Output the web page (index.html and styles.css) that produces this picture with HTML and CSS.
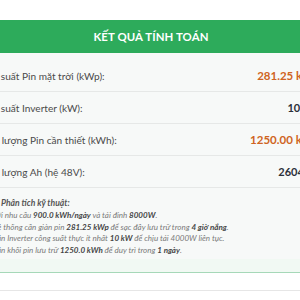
FILE: index.html
```html
<!DOCTYPE html>
<html lang="vi">
<head>
<meta charset="utf-8">
<link rel="stylesheet" href="styles.css">
</head>
<body>
<div class="page">
  <div class="card">
    <div class="card-head">KẾT QUẢ TÍNH TOÁN</div>
    <div class="card-body">
      <div class="row"><span class="label">Công suất Pin mặt trời (kWp):</span><span class="value hi">281.25 kWp</span></div>
      <div class="row"><span class="label">Công suất Inverter (kW):</span><span class="value">10 kW</span></div>
      <div class="row"><span class="label">Dung lượng Pin cần thiết (kWh):</span><span class="value hi">1250.00 kWh</span></div>
      <div class="row"><span class="label">Dung lượng Ah (hệ 48V):</span><span class="value">2604 Ah</span></div>
      <div class="note">
        <div class="note-title">Phân tích kỹ thuật:</div>
        <div class="note-lines">
          <div>Với nhu cầu <b>900.0 kWh/ngày</b> và tải đỉnh <b>8000W</b>.</div>
          <div>Hệ thống cần giàn pin <b>281.25 kWp</b> để sạc đầy lưu trữ trong <b>4 giờ nắng</b>.</div>
          <div>Cần Inverter công suất thực ít nhất <b>10 kW</b> để chịu tải 4000W liên tục.</div>
          <div>Cần khối pin lưu trữ <b>1250.0 kWh</b> để duy trì trong <b>1 ngày</b>.</div>
        </div>
      </div>
      <div class="foot"></div>
    </div>
  </div>
  <div class="after"></div>
</div>
</body>
</html>
```
FILE: styles.css
```css
html, body {
  margin: 0;
  padding: 0;
  background: #ffffff;
  overflow: hidden;
}
.page {
  width: 300px;
  height: 300px;
  overflow: hidden;
  padding-top: 20px;
  box-sizing: border-box;
  font-family: Lato, "Open Sans", sans-serif;
}
.card {
  width: 392px;
  margin-left: -45px;
}
.card-head {
  background: #2dab5b;
  color: #ffffff;
  font-weight: 700;
  font-size: 11.4px;
  text-align: center;
  height: 33px;
  line-height: 33px;
  letter-spacing: 0.1px;
}
.card-body {
  background: #f7f9f8;
  padding: 7px 27px 0 20px;
}
.row {
  display: flex;
  justify-content: space-between;
  align-items: center;
  height: 31px;
  border-bottom: 1px solid #e6e8e7;
}
.label {
  font-size: 10.1px;
  color: #4a4a4a;
}
.value {
  font-weight: 700;
  font-size: 11px;
  color: #2c3038;
}
.value.hi {
  color: #cf6422;
  font-size: 11.5px;
}
.note {
  padding: 10px 0 2px 0;
  font-size: 8px;
  font-style: italic;
  color: #7a7a7a;
  line-height: 11.8px;
}
.note-title {
  font-weight: 700;
  font-size: 8.6px;
  color: #555;
  margin-left: 26px;
}
.note-lines {
  margin-left: 17px;
}
.note-lines b {
  color: #444;
}
.foot {
  height: 13px;
  margin: 0 -27px 0 -20px;
  background: #f1f9f3;
  border-bottom: 1px solid #a6d8b8;
}
.after {
  height: 17px;
  border-bottom: 1px solid #e6e6e6;
}
```
